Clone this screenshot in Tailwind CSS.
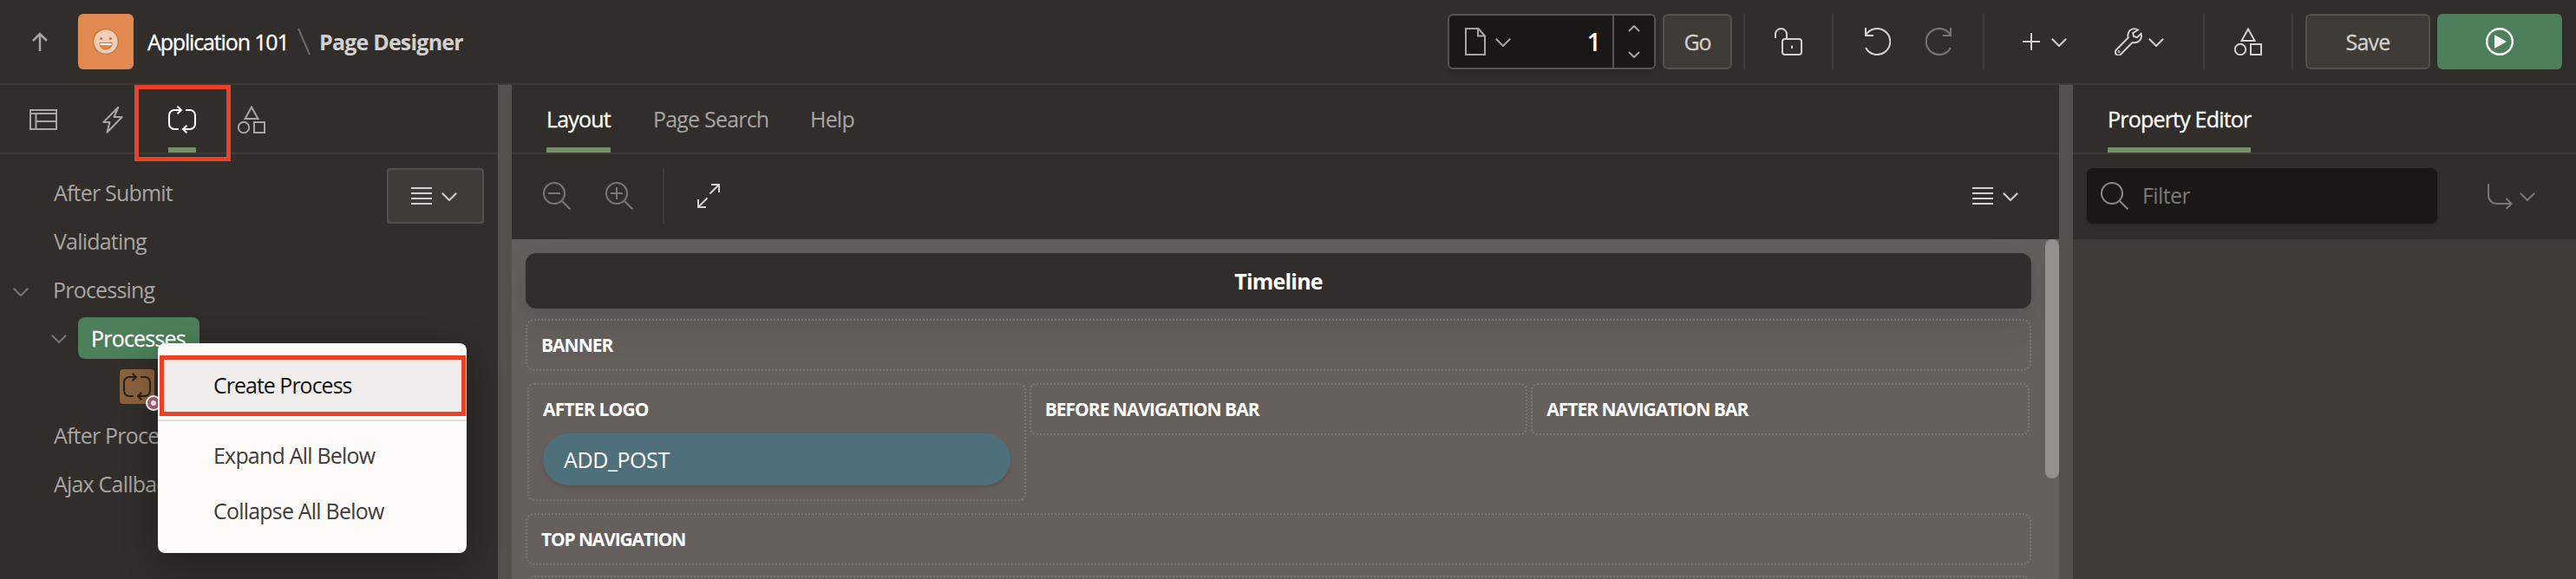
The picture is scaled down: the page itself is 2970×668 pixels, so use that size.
<!DOCTYPE html>
<html lang="en">
<head>
<meta charset="utf-8">
<title>Page Designer</title>
<script src="https://cdn.jsdelivr.net/npm/@tailwindcss/browser@4"></script>
</head>
<body class="relative flex h-[668px] w-[2970px] flex-col overflow-hidden bg-[#312d2a] font-['Open_Sans',sans-serif] text-[25px] leading-[34px] tracking-[-0.8px] text-[#a8a5a2]">
<svg width="0" height="0" class="absolute">
  <defs>
    <symbol id="chev" viewBox="0 0 18 10"><path d="M.8 .8 9 9l8.200-8.200"/></symbol>
    <symbol id="lines" viewBox="0 0 24 20"><path d="M0 1h24M0 7h24M0 13h24M0 19h24"/></symbol>
    <symbol id="shapes" viewBox="0 0 32 32"><path d="M16 1.500 23.500 15h-15z"/><circle cx="7" cy="25" r="6.200"/><rect x="19" y="19" width="12" height="12"/></symbol>
    <symbol id="process" viewBox="0 0 32 32"><path d="M12 27H7a6 6 0 0 1-6-6V11a6 6 0 0 1 6-6h8M10.500.700 15 5l-4.500 4.300M20 5h5a6 6 0 0 1 6 6v10a6 6 0 0 1-6 6h-8M21.500 22.700 17 27l4.500 4.300"/></symbol>
    <symbol id="search" viewBox="0 0 32 32"><circle cx="13" cy="13" r="12"/><path d="m22 22 9.500 9.500"/></symbol>
  </defs>
</svg>

<!-- Top bar -->
<header class="flex h-[98px] shrink-0 items-center border-b-2 border-[#3d3936] pr-4 pl-[37px]">
  <svg class="h-[22px] w-[18px] fill-none stroke-[#a8a5a2] stroke-[2.500]" viewBox="0 0 18 22"><path d="M9 22V2M1 10l8-8 8 8"/></svg>
  <div class="ml-[35px] flex size-16 items-center justify-center rounded-[6px] bg-[#e2894f]">
    <svg class="size-[30px]" viewBox="0 0 30 30"><circle cx="15" cy="15" r="14.300" fill="#efcdb6" stroke="#c4733c" stroke-width="1.200"/><circle cx="9.700" cy="11.500" r="1.600" fill="#c4733c"/><circle cx="20.300" cy="11.500" r="1.600" fill="#c4733c"/><path d="M8 16.500h14v1a7 6.500 0 0 1-14 0z" fill="#e2894f" stroke="#c4733c"/><path d="M8.500 17h13v2h-13z" fill="#fff"/></svg>
  </div>
  <span class="ml-4 w-[161px] whitespace-nowrap tracking-[-1.15px] text-white [-webkit-text-stroke:0.3px]">Application 101</span>
  <svg class="ml-3 h-8 w-[15px] fill-none stroke-[#6f6b68] stroke-2" viewBox="0 0 15 32"><path d="m1 1 13 30"/></svg>
  <span class="ml-[10px] whitespace-nowrap font-bold text-[#d3d1cf]">Page Designer</span>

  <div class="ml-auto flex h-16 items-center">
    <div class="flex h-16 w-60 items-center rounded-[6px] border-2 border-[#5a534e] bg-[#1a1816] shadow-md">
      <svg class="ml-[18px] h-8 w-6 fill-none stroke-[#a8a5a2] stroke-2" viewBox="0 0 24 32"><path d="M1 1h14.500L23 9.500V31H1zM15 1v8.500h8"/></svg>
      <svg class="mt-0.5 ml-[11px] h-2.5 w-[18px] fill-none stroke-[#a8a5a2] stroke-2"><use href="#chev"/></svg>
      <span class="ml-auto pr-[14px] text-[28px] font-semibold text-white">1</span>
      <div class="flex h-full w-12 flex-col items-center justify-between border-l-2 border-[#5a534e] py-[11px]">
        <svg class="h-2 w-3.5 fill-none stroke-[#a8a5a2] stroke-2" viewBox="0 0 14 8"><path d="m1 7 6-6 6 6"/></svg>
        <svg class="h-2 w-3.5 fill-none stroke-[#a8a5a2] stroke-2" viewBox="0 0 14 8"><path d="m1 1 6 6 6-6"/></svg>
      </div>
    </div>
    <button class="ml-2 flex h-16 w-20 items-center justify-center rounded-[6px] border-2 border-[#54504b] bg-[#3f3b36] tracking-[-1px] text-[#d3d1cf] [-webkit-text-stroke:0.3px]">Go</button>
    <i class="ml-[13px] h-16 w-0.5 bg-[#413d3a]"></i>
    <svg class="ml-[34px] size-8 fill-none stroke-[#d3d1cf] stroke-2" viewBox="0 0 32 32"><path d="M1 12V7.500a6.500 6.500 0 0 1 13 0V13M20 20.500v3.500"/><rect x="9" y="13" width="22" height="18" rx="3"/></svg>
    <i class="ml-[34px] h-16 w-0.5 bg-[#413d3a]"></i>
    <svg class="ml-9 h-8 w-[30px] fill-none stroke-[#d3d1cf] stroke-2" viewBox="0 0 30 32"><path d="M1 9a15 15 0 1 1 0 14M1 0v9h9"/></svg>
    <svg class="ml-10 h-8 w-[30px] fill-none stroke-[#7b7774] stroke-2" viewBox="0 0 30 32"><path d="M29 9a15 15 0 1 0 0 14M29 0v9h-9"/></svg>
    <i class="ml-9 h-16 w-0.5 bg-[#413d3a]"></i>
    <svg class="ml-11 size-5 fill-none stroke-[#d3d1cf] stroke-2" viewBox="0 0 20 20"><path d="M10 0v20M0 10h20"/></svg>
    <svg class="mt-0.5 ml-[13px] h-2.5 w-[18px] fill-none stroke-[#d3d1cf] stroke-2"><use href="#chev"/></svg>
    <svg class="ml-[55px] size-8 fill-none stroke-[#d3d1cf] stroke-2" viewBox="0 0 32 32"><path d="M27 2.500c-3-2-7-1.800-9.400.6-2.300 2.300-2.700 5-1.900 8.400L2 25.500a3.500 3.500 0 0 0 5 5.200L20.500 17c3 .6 6 0 8.200-2 2.100-2 2.800-5 1.800-8.200L26 11.200l-4-1.200-.8-4z"/><circle cx="5" cy="27.500" r=".5"/></svg>
    <svg class="mt-0.5 ml-[7px] h-2.5 w-[18px] fill-none stroke-[#d3d1cf] stroke-2"><use href="#chev"/></svg>
    <i class="ml-[45px] h-16 w-0.5 bg-[#413d3a]"></i>
    <svg class="ml-[34px] size-8 fill-none stroke-[#d3d1cf] stroke-2"><use href="#shapes"/></svg>
    <i class="ml-[34px] h-16 w-0.5 bg-[#413d3a]"></i>
    <button class="ml-3.5 flex h-16 w-36 items-center justify-center rounded-[6px] border-2 border-[#54504b] bg-[#3f3b36] tracking-[-0.8px] text-[#d3d1cf] [-webkit-text-stroke:0.3px]">Save</button>
    <button class="ml-2 flex h-16 w-36 items-center justify-center rounded-[6px] bg-[#4c7f5a]">
      <svg class="size-8" viewBox="0 0 32 32"><circle cx="16" cy="16" r="14.800" fill="none" stroke="#fff" stroke-width="2.400"/><path d="M10 8v16l14-8z" fill="#fff"/></svg>
    </button>
  </div>
</header>

<main class="flex min-h-0 flex-1">
  <!-- Processing tree -->
  <section class="flex w-[574px] shrink-0 flex-col">
    <nav class="flex h-20 border-b-2 border-[#3d3936] pl-2.5">
      <div class="flex w-20 items-center justify-center pt-0.5"><svg class="size-8 fill-none stroke-[#a8a5a2] stroke-2" viewBox="0 0 32 32"><path d="M1 5h30v22H1zM1 9h30M7.500 9v18M7.500 18H31"/></svg></div>
      <div class="flex w-20 items-center justify-center pt-0.5"><svg class="size-8 fill-none stroke-[#a8a5a2] stroke-2" viewBox="0 0 32 32"><path d="M22.300 1.800 5.300 19h7.200l-3 11.800L26.700 13h-9.200z" stroke-linejoin="round"/></svg></div>
      <div class="flex w-20 flex-col items-center"><svg class="mt-6 size-8 fill-none stroke-white stroke-2"><use href="#process"/></svg><i class="mt-auto h-1.5 w-8 bg-[#749168]"></i></div>
      <div class="flex w-20 items-center justify-center pt-0.5"><svg class="size-8 fill-none stroke-[#a8a5a2] stroke-2"><use href="#shapes"/></svg></div>
    </nav>
    <div class="flex flex-1 items-start pt-4 pr-4">
      <ul class="flex-1 whitespace-nowrap">
        <li class="flex h-14 items-center pl-[62px]">After Submit</li>
        <li class="flex h-14 items-center pl-[62px]">Validating</li>
        <li class="flex h-14 items-center pl-[15px]"><svg class="mt-1.5 h-2.5 w-[18px] fill-none stroke-[#7b7774] stroke-2"><use href="#chev"/></svg><span class="ml-[28px]">Processing</span></li>
        <li class="flex h-14 items-center pl-[59px]"><svg class="mt-0.5 h-2.5 w-[18px] fill-none stroke-[#7b7774] stroke-2"><use href="#chev"/></svg><span class="ml-[13px] flex h-12 w-[140px] items-center rounded-lg bg-[#4c7f5a] pl-[15px] text-white [-webkit-text-stroke:0.3px]">Processes</span></li>
        <li class="flex h-14 items-center pl-[138px]">
          <div class="relative flex size-10 items-center justify-center rounded bg-[#89623f]">
            <svg class="size-8 fill-none stroke-[#2a211a] stroke-2"><use href="#process"/></svg>
            <svg class="absolute top-[30px] left-[30px] size-[18px]" viewBox="0 0 18 18"><circle cx="9" cy="9" r="9" fill="#fff"/><circle cx="9" cy="9" r="7" fill="#ad6478"/><circle cx="9" cy="9" r="3" fill="#fff"/></svg>
          </div>
        </li>
        <li class="flex h-14 items-center pl-[62px]">After Processing</li>
        <li class="flex h-14 items-center pl-[62px]">Ajax Callback</li>
      </ul>
      <button class="flex h-16 w-28 items-center rounded-[4px] border-2 border-[#54504b] bg-[#3f3b36] pl-[26px]">
        <svg class="h-5 w-6 fill-none stroke-[#d3d1cf] stroke-2"><use href="#lines"/></svg>
        <svg class="mt-0.5 ml-[11px] h-2.5 w-[18px] fill-none stroke-[#d3d1cf] stroke-2"><use href="#chev"/></svg>
      </button>
    </div>
  </section>
  <div class="w-4 shrink-0 bg-[#55504b]"></div>

  <!-- Layout -->
  <section class="flex w-[1784px] shrink-0 flex-col">
    <nav class="flex h-20 shrink-0 gap-[49px] border-b-2 border-[#3d3936] pl-10">
      <div class="flex h-[78px] w-[74px] items-center border-b-6 border-[#749168] pt-1.5 text-white [-webkit-text-stroke:0.3px]">Layout</div>
      <div class="flex h-[78px] w-[132px] items-center whitespace-nowrap">Page Search</div>
      <div class="flex h-[78px] items-center">Help</div>
    </nav>
    <div class="flex h-[98px] shrink-0 items-center pb-0.5 pl-9">
      <svg class="size-8 fill-none stroke-[#7b7774] stroke-2"><use href="#search"/><path d="M6 13h14"/></svg>
      <svg class="ml-10 size-8 fill-none stroke-[#7b7774] stroke-2"><use href="#search"/><path d="M6 13h14M13 6v14"/></svg>
      <i class="ml-[34px] h-16 w-0.5 bg-[#3f3b38]"></i>
      <svg class="ml-[38px] h-7 w-[26px] fill-none stroke-[#d3d1cf] stroke-2" viewBox="0 0 26 28"><path d="M16 1h9v9M25 1 14.500 11.500M1 18v9h9M1 27l10.500-10.500"/></svg>
      <svg class="ml-auto h-5 w-6 fill-none stroke-[#d3d1cf] stroke-2"><use href="#lines"/></svg>
      <svg class="mt-0.5 mr-[47px] ml-[11px] h-2.5 w-[18px] fill-none stroke-[#d3d1cf] stroke-2"><use href="#chev"/></svg>
    </div>
    <div class="flex min-h-0 flex-1 overflow-hidden bg-[#65605b] pl-4">
      <div class="flex w-[1736px] flex-col pt-4 text-[21px] leading-7 font-bold tracking-[-1px] text-white">
        <div class="flex h-16 shrink-0 items-center justify-center rounded-xl bg-[#312d2a] text-[25px] tracking-[-0.8px] text-white shadow-[0_12px_48px_rgba(0,0,0,0.16)]">Timeline</div>
        <div class="mt-3 flex h-[60px] shrink-0 items-center rounded-[10px] border-2 border-dotted border-[#7c7772] pl-4">BANNER</div>
        <div class="mt-3.5 grid shrink-0 grid-cols-3 items-start gap-1 px-0.5">
          <div class="h-[136px] rounded-lg border-2 border-dotted border-[#7c7772] px-4">
            <div class="flex h-14 items-center tracking-[-0.8px]">AFTER LOGO</div>
            <div class="flex h-[60px] items-center rounded-full bg-[#4d707b] pl-6 text-[25px] font-normal tracking-[-0.4px] shadow-md">ADD_POST</div>
          </div>
          <div class="flex h-[60px] items-center rounded-lg border-2 border-dotted border-[#7c7772] pl-4">BEFORE NAVIGATION BAR</div>
          <div class="flex h-[60px] items-center rounded-lg border-2 border-dotted border-[#7c7772] pl-4">AFTER NAVIGATION BAR</div>
        </div>
        <div class="mt-3.5 flex h-[60px] shrink-0 items-center rounded-[10px] border-2 border-dotted border-[#7c7772] pl-4 tracking-[-1.15px]">TOP NAVIGATION</div>
        <div class="mx-0.5 mt-3 h-[60px] shrink-0 rounded-lg border-2 border-dotted border-[#7c7772]"></div>
      </div>
      <div class="ml-4 h-[276px] w-4 rounded-full bg-[#95908c]"></div>
    </div>
  </section>
  <div class="w-4 shrink-0 bg-[#55504b]"></div>

  <!-- Property editor -->
  <section class="flex flex-1 flex-col">
    <nav class="flex h-20 shrink-0 border-b-2 border-[#3d3936] pl-10">
      <div class="flex h-[78px] w-[165px] items-center border-b-6 border-[#749168] pt-1.5 whitespace-nowrap text-white [-webkit-text-stroke:0.3px]">Property Editor</div>
    </nav>
    <div class="flex h-[98px] shrink-0 items-center pb-0.5 pl-4">
      <div class="flex h-16 w-[404px] items-center rounded-[6px] bg-[#1a1816] pl-4 text-[#7b7774] shadow-md">
        <svg class="size-8 fill-none stroke-[#8b8784] stroke-2"><use href="#search"/></svg>
        <span class="ml-4 pb-0.5 tracking-[-0.6px]">Filter</span>
      </div>
      <svg class="ml-[58px] h-8 w-[29px] fill-none stroke-[#7b7774] stroke-2" viewBox="0 0 29 32"><path d="M1 2v12c0 7 4 11 11 11h15M21.500 19l6 6-6 6"/></svg>
      <svg class="mt-0.5 ml-2 h-2.5 w-[18px] fill-none stroke-[#7b7774] stroke-2"><use href="#chev"/></svg>
    </div>
    <div class="flex-1 bg-[#3f3b36]"></div>
  </section>
</main>

<!-- Context menu -->
<div class="absolute top-[396px] left-[182px] flex h-[242px] w-[356px] flex-col rounded-lg bg-[#fcfbfa] pt-3.5 whitespace-nowrap text-[#403c38] shadow-[0_12px_40px_rgba(0,0,0,0.3)]">
  <div class="ml-0.5 flex h-[70px] w-[353px] items-center border-5 border-[#eb4126] bg-[#f0eeec] pb-0.5 pl-[57px] tracking-[-1px] text-[#161513]">Create Process</div>
  <div class="mt-1 h-0.5 bg-[#e3e1df]"></div>
  <div class="mt-[7px] flex h-16 items-center pl-16">Expand All Below</div>
  <div class="flex h-16 items-center pl-16">Collapse All Below</div>
</div>

<!-- Highlight frame over the Processing tab -->
<div class="absolute top-[98px] left-[155px] h-[88px] w-[111px] border-5 border-[#eb4126]"></div>
</body>
</html>
